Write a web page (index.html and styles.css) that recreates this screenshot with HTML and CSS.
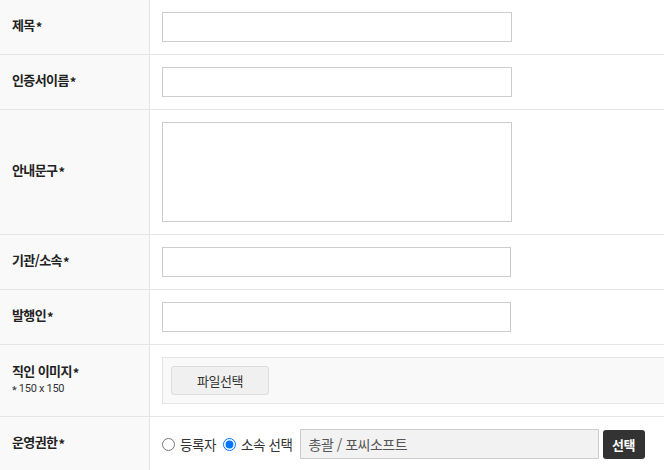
FILE: index.html
```html
<!DOCTYPE html>
<html lang="ko">
<head>
<meta charset="utf-8">
<title>form</title>
<link rel="stylesheet" href="styles.css">
</head>
<body>
<div class="form">
  <div class="row">
    <div class="label"><span>제목<span class="req">*</span></span></div>
    <div class="field"><input class="text" type="text"></div>
  </div>
  <div class="row">
    <div class="label"><span>인증서이름<span class="req">*</span></span></div>
    <div class="field"><input class="text" type="text"></div>
  </div>
  <div class="row">
    <div class="label"><span>안내문구<span class="req">*</span></span></div>
    <div class="field"><textarea class="area"></textarea></div>
  </div>
  <div class="row">
    <div class="label"><span>기관/소속<span class="req">*</span></span></div>
    <div class="field"><input class="text narrow" type="text"></div>
  </div>
  <div class="row">
    <div class="label"><span>발행인<span class="req">*</span></span></div>
    <div class="field"><input class="text narrow" type="text"></div>
  </div>
  <div class="row">
    <div class="label">
      <span>직인 이미지<span class="req">*</span></span>
      <span class="hint"><span class="star">*</span> 150 x 150</span>
    </div>
    <div class="field">
      <div class="filebox"><button class="filebtn" type="button">파일선택</button></div>
    </div>
  </div>
  <div class="row">
    <div class="label"><span>운영권한<span class="req">*</span></span></div>
    <div class="field radios">
      <label class="opt"><input type="radio" name="auth"><span>등록자</span></label>
      <label class="opt"><input type="radio" name="auth" checked><span>소속 선택</span></label>
      <input class="text gray" type="text" value="총괄 / 포씨소프트" readonly>
      <button class="darkbtn" type="button">선택</button>
    </div>
  </div>
</div>
</body>
</html>
```
FILE: styles.css
```css
html, body {
  margin: 0;
  padding: 0;
  overflow: hidden;
  background: #fff;
}
body {
  font-family: "Noto Sans CJK KR", "Noto Sans", sans-serif;
  color: #222;
}
.form {
  width: 720px;
}
.row {
  display: flex;
  border-bottom: 1px solid #e5e5e5;
}
.label {
  width: 137px;
  flex: none;
  padding: 0 0 2px 12px;
  background: #f9f9f9;
  border-right: 1px solid #e5e5e5;
  display: flex;
  flex-direction: column;
  justify-content: center;
  font-size: 13px;
  line-height: 18px;
  font-weight: bold;
  letter-spacing: -0.6px;
  color: #222;
}
.req {
  font-weight: bold;
  margin-left: 1px;
  vertical-align: -2px;
}
.hint {
  font-family: Roboto, "Noto Sans CJK KR", sans-serif;
  font-size: 11px;
  line-height: 14px;
  font-weight: normal;
  letter-spacing: -0.3px;
  color: #333;
}
.star {
  vertical-align: -2px;
}
.field {
  flex: 1;
  padding: 12px 0 12px 12px;
  display: flex;
  align-items: center;
}
.text {
  box-sizing: border-box;
  width: 350px;
  height: 30px;
  border: 1px solid #ccc;
  margin: 0;
  padding: 0 10px;
  font-family: inherit;
  font-size: 14px;
  background: #fff;
}
.text.narrow {
  width: 349px;
}
.area {
  box-sizing: border-box;
  width: 350px;
  height: 100px;
  border: 1px solid #ccc;
  margin: 0;
  resize: none;
  display: block;
}
.filebox {
  box-sizing: border-box;
  width: 600px;
  height: 47px;
  padding: 8px;
  background: #f9f9f9;
  border: 1px solid #e5e5e5;
  display: flex;
  align-items: center;
}
.filebtn {
  width: 98px;
  height: 29px;
  margin: 0;
  border: 1px solid #ddd;
  border-radius: 3px;
  background: #f0f0f0;
  font-family: inherit;
  font-size: 13px;
  color: #333;
  letter-spacing: -0.4px;
}
.radios {
  font-size: 13.5px;
  color: #333;
  letter-spacing: -0.4px;
}
.opt {
  display: flex;
  align-items: center;
  margin-right: 7px;
}
.opt input {
  width: 13px;
  height: 13px;
  margin: 0 5px 0 0;
}
.text.gray {
  width: 299px;
  background: #f2f2f2;
  color: #555;
  padding: 0 8px;
  font-size: 14px;
  letter-spacing: -0.5px;
}
.darkbtn {
  margin: 0 0 0 4px;
  width: 42px;
  height: 29px;
  border: none;
  border-radius: 3px;
  background: #333;
  color: #fff;
  font-family: inherit;
  font-size: 13px;
  font-weight: bold;
  letter-spacing: -0.4px;
}
```
